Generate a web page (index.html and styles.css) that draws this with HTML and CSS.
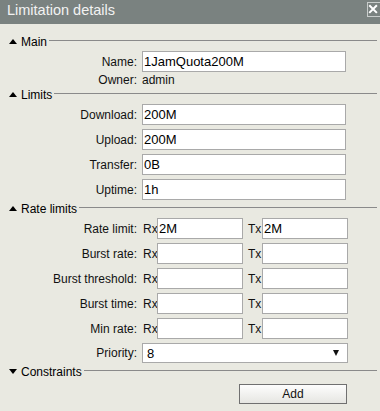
FILE: index.html
```html
<!DOCTYPE html>
<html>
<head>
<meta charset="utf-8">
<title>Limitation details</title>
<link rel="stylesheet" href="styles.css">
</head>
<body>
<div class="dialog">
  <div class="titlebar">
    <span class="title">Limitation details</span>
    <span class="close">
      <svg width="13" height="13" viewBox="0 0 13 13"><path d="M1.5 1.5 L10.5 10.5 M10.5 1.5 L1.5 10.5" stroke="#ffffff" stroke-width="2.4" fill="none"/></svg>
    </span>
  </div>
  <div class="content">
    <div class="section-head"><span class="tri up"></span><span class="sh-text">Main</span><span class="sh-line"></span></div>
    <div class="row"><label class="lbl">Name:</label><div class="field"><input class="inp wide" type="text" value="1JamQuota200M"></div></div>
    <div class="row plain"><span class="lbl">Owner:</span><div class="field"><span class="val">admin</span></div></div>

    <div class="section-head"><span class="tri up"></span><span class="sh-text">Limits</span><span class="sh-line"></span></div>
    <div class="row"><label class="lbl">Download:</label><div class="field"><input class="inp wide" type="text" value="200M"></div></div>
    <div class="row"><label class="lbl">Upload:</label><div class="field"><input class="inp wide" type="text" value="200M"></div></div>
    <div class="row"><label class="lbl">Transfer:</label><div class="field"><input class="inp wide" type="text" value="0B"></div></div>
    <div class="row"><label class="lbl">Uptime:</label><div class="field"><input class="inp wide" type="text" value="1h"></div></div>

    <div class="section-head"><span class="tri up"></span><span class="sh-text">Rate limits</span><span class="sh-line"></span></div>
    <div class="row"><label class="lbl">Rate limit:</label><div class="field"><span class="rx">Rx</span><input class="inp half" type="text" value="2M"><span class="tx">Tx</span><input class="inp half" type="text" value="2M"></div></div>
    <div class="row"><label class="lbl">Burst rate:</label><div class="field"><span class="rx">Rx</span><input class="inp half" type="text" value=""><span class="tx">Tx</span><input class="inp half" type="text" value=""></div></div>
    <div class="row"><label class="lbl">Burst threshold:</label><div class="field"><span class="rx">Rx</span><input class="inp half" type="text" value=""><span class="tx">Tx</span><input class="inp half" type="text" value=""></div></div>
    <div class="row"><label class="lbl">Burst time:</label><div class="field"><span class="rx">Rx</span><input class="inp half" type="text" value=""><span class="tx">Tx</span><input class="inp half" type="text" value=""></div></div>
    <div class="row"><label class="lbl">Min rate:</label><div class="field"><span class="rx">Rx</span><input class="inp half" type="text" value=""><span class="tx">Tx</span><input class="inp half" type="text" value=""></div></div>
    <div class="row"><label class="lbl">Priority:</label><div class="field"><div class="select"><span class="sel-val">8</span><span class="sel-arrow"></span></div></div></div>

    <div class="section-head"><span class="tri down"></span><span class="sh-text">Constraints</span><span class="sh-line"></span></div>
    <div class="row btnrow"><span class="lbl"></span><div class="field end"><button class="btn" type="button">Add</button></div></div>
  </div>
</div>
</body>
</html>
```
FILE: styles.css
```css
html, body {
  margin: 0;
  padding: 0;
}
body {
  background: #e9e9e1;
  font-family: "Liberation Sans", Arial, sans-serif;
  font-size: 12px;
  color: #111;
  width: 380px;
  height: 411px;
  overflow: hidden;
}
.dialog {
  width: 380px;
  height: 411px;
  overflow: hidden;
}
.titlebar {
  height: 24px;
  background: #7a8280;
  display: flex;
  align-items: flex-start;
  justify-content: space-between;
  overflow: hidden;
}
.title {
  color: #f2f2f2;
  font-size: 14.5px;
  line-height: 21px;
  padding-left: 7px;
}
.close {
  box-sizing: border-box;
  width: 15px;
  height: 15px;
  margin-top: 2px;
  margin-right: -2px;
  border: 1px solid #c9cdcc;
  display: flex;
  align-items: center;
  justify-content: center;
  padding-right: 2px;
}
.close svg {
  display: block;
}
.content {
  padding: 9px 3px 0 0;
}
.section-head {
  height: 18px;
  display: flex;
  align-items: center;
  padding-left: 9px;
}
.tri {
  width: 0;
  height: 0;
  border-left: 4px solid transparent;
  border-right: 4px solid transparent;
  margin-right: 4px;
}
.tri.up {
  border-bottom: 5px solid #000;
  margin-top: -1px;
}
.tri.down {
  border-top: 5px solid #000;
  margin-top: -1px;
}
.sh-text {
  line-height: 14px;
  color: #000;
}
.sh-line {
  flex: 1;
  height: 1px;
  background: #8a8a8a;
  margin-left: 2px;
  margin-bottom: 3px;
}
.row {
  display: grid;
  grid-template-columns: 137px 206px;
  column-gap: 5px;
  align-items: center;
  margin-top: 4px;
}
.section-head + .row {
  margin-top: 0;
}
.row.plain {
  box-sizing: border-box;
  height: 14px;
  padding-top: 3px;
  margin-top: 0;
  align-items: start;
  line-height: 11px;
}
.lbl {
  text-align: right;
  white-space: nowrap;
}
.field {
  display: flex;
  align-items: center;
}
.field.end {
  justify-content: flex-end;
}
.inp {
  box-sizing: border-box;
  height: 21px;
  margin: 0;
  border: 1px solid #a9a9a9;
  background: #fff;
  padding: 0 1px;
  font-family: "Liberation Sans", Arial, sans-serif;
  font-size: 13px;
  color: #000;
  outline: none;
  border-radius: 0;
}
.inp.wide {
  width: 204px;
}
.inp.half {
  width: 86px;
}
.rx {
  width: 15px;
  padding-left: 1px;
  box-sizing: border-box;
}
.tx {
  width: 19px;
  padding-left: 5px;
  box-sizing: border-box;
}
.select {
  box-sizing: border-box;
  width: 206px;
  height: 20px;
  border: 1px solid #a9a9a9;
  background: #fff;
  display: flex;
  align-items: center;
  justify-content: space-between;
  padding: 0 8px 0 4px;
  font-size: 13px;
  color: #000;
}
.sel-arrow {
  width: 0;
  height: 0;
  border-left: 3px solid transparent;
  border-right: 3px solid transparent;
  border-top: 6px solid #111;
}
.row.btnrow {
  margin-top: 3px;
}
.btn {
  box-sizing: border-box;
  width: 108px;
  height: 20px;
  border: 1px solid #707070;
  background: linear-gradient(#fdfdfd, #e6e6e2);
  font-family: "Liberation Sans", Arial, sans-serif;
  font-size: 12px;
  color: #111;
  padding: 0;
  margin: 0 1px 0 0;
  border-radius: 0;
}
```
